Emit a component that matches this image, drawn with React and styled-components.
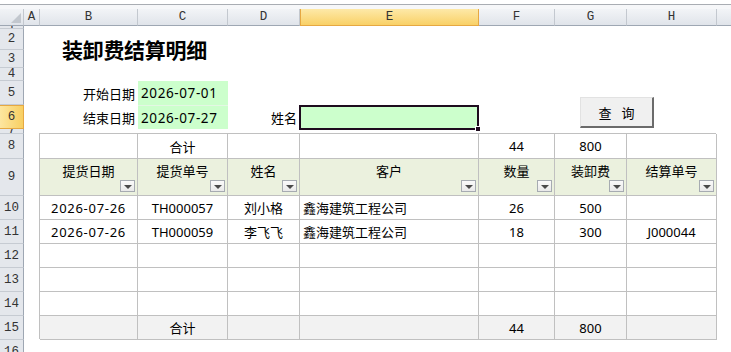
import React from 'react';
import styled, { createGlobalStyle } from 'styled-components';

const GlobalStyle = createGlobalStyle`
  * { box-sizing: border-box; }
  html, body { margin: 0; padding: 0; background: #fff; }
  body {
    width: 731px;
    height: 352px;
    overflow: hidden;
    font-family: "Noto Sans", "Noto Sans CJK SC", sans-serif;
    color: #000;
  }
`;

const Page = styled.div`
  display: flex;
  flex-direction: column;
  width: 731px;
  height: 352px;
  overflow: hidden;
`;

const FormulaEdge = styled.div`
  flex-shrink: 0;
  height: 5px;
  background: #fff;
  border-bottom: 1px solid #a9adb3;
`;

const HeaderGap = styled.div`
  flex-shrink: 0;
  height: 4px;
  background: #f6f7f9;
`;

const Sheet = styled.div`
  flex-shrink: 0;
  display: grid;
  grid-template-columns: 24px 16px 98px 90px 72px 179px 76px 72px 90px 90px;
  grid-template-rows: 17px 3px 21px 18px 13px 24px 24px 5px 25px 37px repeat(6, 24px) 24px;
  background: #fff;
`;

const Corner = styled.div`
  grid-column: 1;
  grid-row: 1;
  position: relative;
  background: linear-gradient(#f1f3f6, #e0e4ea);
  border-right: 1px solid #c3c8cf;
  border-bottom: 1px solid #9ea7b3;
  &::after {
    content: '';
    position: absolute;
    right: 2px;
    bottom: 2px;
    border-left: 10px solid transparent;
    border-bottom: 10px solid #c2c7ce;
  }
`;

const ColHead = styled.div`
  grid-row: 1;
  grid-column: ${(p) => p.$col};
  display: flex;
  align-items: center;
  justify-content: center;
  font-family: "Liberation Mono", monospace;
  font-size: 12.5px;
  color: #333;
  background: ${(p) => (p.$active
    ? 'linear-gradient(#fde9a8, #f9d167)'
    : 'linear-gradient(#f2f4f7, #e0e4ea)')};
  border-right: 1px solid ${(p) => (p.$active ? '#e6a842' : '#c3c8cf')};
  border-left: ${(p) => (p.$active ? '1px solid #e6a842' : 'none')};
  border-bottom: 1px solid ${(p) => (p.$active ? '#e6a842' : '#9ea7b3')};
`;

const RowHead = styled.div`
  grid-column: 1;
  grid-row: ${(p) => p.$row};
  display: flex;
  align-items: center;
  justify-content: center;
  overflow: hidden;
  font-family: "Liberation Mono", monospace;
  font-size: 12.5px;
  line-height: 14px;
  color: #333;
  background: ${(p) => (p.$active ? 'linear-gradient(90deg, #fde6a0, #f8cf62)' : '#e4e7ec')};
  border-bottom: 1px solid ${(p) => (p.$active ? '#e6a842' : '#c6cbd2')};
  border-top: ${(p) => (p.$active ? '1px solid #e6a842' : 'none')};
  border-right: 1px solid ${(p) => (p.$active ? '#e6a842' : '#9ea7b3')};
`;

const Title = styled.h1`
  grid-column: 3 / 7;
  grid-row: 3 / 5;
  margin: 0;
  padding-left: 22px;
  display: flex;
  align-items: center;
  font-family: "Noto Sans CJK SC", sans-serif;
  font-size: 21px;
  font-weight: 700;
  letter-spacing: -0.3px;
`;

const FieldLabel = styled.div`
  grid-column: ${(p) => p.$col};
  grid-row: ${(p) => p.$row};
  display: flex;
  align-items: center;
  justify-content: flex-end;
  padding-right: 3px;
  font-size: 13px;
`;

const DateValue = styled.div`
  grid-column: 4;
  grid-row: ${(p) => p.$row};
  display: flex;
  align-items: center;
  padding-left: 3px;
  font-size: 13.5px;
  letter-spacing: 0.6px;
  background: #ccffcc;
  border-top: ${(p) => (p.$second ? '1px solid #e4f7e4' : 'none')};
`;

const NameInput = styled.div`
  grid-column: 6;
  grid-row: 7;
  position: relative;
  margin: 0 0 -1px -1px;
  background: #ccffcc;
  border: 2px solid #1e0c1e;
`;

const FillHandle = styled.span`
  position: absolute;
  right: -4px;
  bottom: -4px;
  width: 6px;
  height: 6px;
  background: #1e0c1e;
  border: 1px solid #fff;
`;

const QueryButton = styled.button`
  grid-column: 8 / 10;
  grid-row: 6 / 8;
  width: 74px;
  height: 31px;
  margin: 16px 0 0 25px;
  padding: 0;
  font-family: "Noto Sans CJK SC", sans-serif;
  font-size: 13px;
  word-spacing: 7px;
  color: #000;
  background: #f0f0f0;
  border-style: solid;
  border-width: 1px 2px 2px 1px;
  border-color: #e2e2e2 #6b6b6b #6b6b6b #e2e2e2;
`;

const Table = styled.div`
  grid-column: 3 / 10;
  grid-row: 9 / 17;
  display: grid;
  grid-template-columns: 98px 90px 72px 179px 76px 72px 90px;
  grid-template-rows: 25px 37px repeat(6, 24px);
  box-shadow: -1px -1px 0 #c0c0c0;
`;

const Cell = styled.div`
  display: flex;
  align-items: center;
  justify-content: ${(p) => (p.$align === 'left' ? 'flex-start' : 'center')};
  padding: 0 3px;
  font-size: 13px;
  letter-spacing: ${(p) => (p.$wide ? '0.7px' : '0')};
  white-space: nowrap;
  overflow: hidden;
  background: ${(p) => p.$bg || '#fff'};
  border-right: 1px solid #c0c0c0;
  border-bottom: 1px solid #c0c0c0;
`;

const HeadCell = styled.div`
  display: flex;
  flex-direction: column;
  justify-content: space-between;
  align-items: center;
  padding: 3px 2px 3px;
  font-size: 13px;
  background: #ebf1de;
  border-right: 1px solid #c0c0c0;
  border-bottom: 1px solid #c0c0c0;
`;

const HeadLabel = styled.span`
  line-height: 18px;
`;

const FilterButton = styled.span`
  align-self: flex-end;
  width: 15px;
  height: 15px;
  display: flex;
  align-items: center;
  justify-content: center;
  background: linear-gradient(#fafafa, #e9e9e9);
  border: 1px solid #a6abb1;
  &::after {
    content: '';
    margin-top: 1px;
    border-left: 4px solid transparent;
    border-right: 4px solid transparent;
    border-top: 4px solid #4a4a4a;
  }
`;

const columns = ['A', 'B', 'C', 'D', 'E', 'F', 'G', 'H', 'I'];
const headers = ['提货日期', '提货单号', '姓名', '客户', '数量', '装卸费', '结算单号'];
const aligns = ['center', 'center', 'center', 'left', 'center', 'center', 'center'];
const totals = ['', '合计', '', '', '44', '800', ''];
const records = [
  ['2026-07-26', 'TH000057', '刘小格', '鑫海建筑工程公司', '26', '500', ''],
  ['2026-07-26', 'TH000059', '李飞飞', '鑫海建筑工程公司', '18', '300', 'J000044'],
  ['', '', '', '', '', '', ''],
  ['', '', '', '', '', '', ''],
  ['', '', '', '', '', '', ''],
];

const App = () => (
  <Page>
    <GlobalStyle />
    <FormulaEdge />
    <HeaderGap />
    <Sheet>
      <Corner />
      {columns.map((c, i) => (
        <ColHead key={c} $col={i + 2} $active={c === 'E'}>{c}</ColHead>
      ))}
      {Array.from({ length: 16 }, (_, i) => (
        <RowHead key={i} $row={i + 2} $active={i + 1 === 6}>{i + 1}</RowHead>
      ))}

      <Title>装卸费结算明细</Title>

      <FieldLabel $col={3} $row={6}>开始日期</FieldLabel>
      <DateValue $row={6}>2026-07-01</DateValue>
      <FieldLabel $col={3} $row={7}>结束日期</FieldLabel>
      <DateValue $row={7} $second>2026-07-27</DateValue>
      <FieldLabel $col={5} $row={7}>姓名</FieldLabel>
      <NameInput><FillHandle /></NameInput>

      <QueryButton type="button">查 询</QueryButton>

      <Table>
        {totals.map((t, i) => (
          <Cell key={`t${i}`}>{t}</Cell>
        ))}
        {headers.map((h) => (
          <HeadCell key={h}>
            <HeadLabel>{h}</HeadLabel>
            <FilterButton />
          </HeadCell>
        ))}
        {records.map((r, ri) => r.map((v, ci) => (
          <Cell key={`r${ri}-${ci}`} $align={aligns[ci]} $wide={ci === 0}>{v}</Cell>
        )))}
        {totals.map((t, i) => (
          <Cell key={`s${i}`} $bg="#f2f2f2">{t}</Cell>
        ))}
      </Table>
    </Sheet>
  </Page>
);

export default App;
